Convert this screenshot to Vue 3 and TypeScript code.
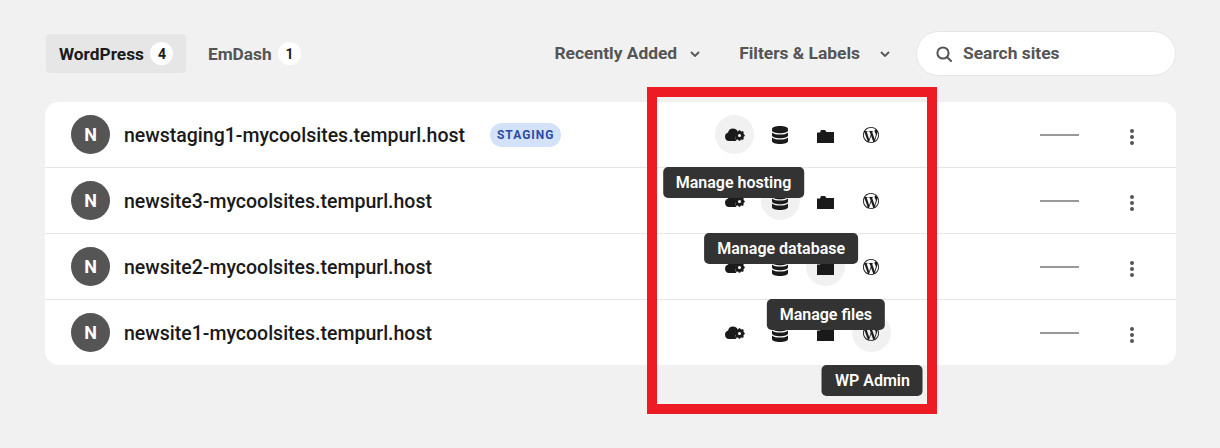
<script setup lang="ts">
interface Site { name: string; staging?: boolean; hover: number }
const sites: Site[] = [
  { name: 'newstaging1-mycoolsites.tempurl.host', staging: true, hover: 0 },
  { name: 'newsite3-mycoolsites.tempurl.host', hover: 1 },
  { name: 'newsite2-mycoolsites.tempurl.host', hover: 2 },
  { name: 'newsite1-mycoolsites.tempurl.host', hover: 3 },
]
const tips = ['Manage hosting', 'Manage database', 'Manage files', 'WP Admin']
const wp = 'M21.469 6.825c.84 1.537 1.318 3.3 1.318 5.175 0 3.979-2.156 7.456-5.363 9.325l3.295-9.527c.615-1.54.82-2.771.82-3.864 0-.405-.026-.78-.07-1.11m-7.981.105c.647-.03 1.232-.105 1.232-.105.582-.075.514-.93-.067-.899 0 0-1.755.135-2.88.135-1.064 0-2.85-.15-2.85-.15-.585-.03-.661.855-.075.885 0 0 .54.061 1.125.09l1.68 4.605-2.37 7.08L5.354 6.9c.649-.03 1.234-.1 1.234-.1.585-.075.516-.93-.065-.896 0 0-1.746.138-2.874.138-.2 0-.438-.008-.69-.015C4.911 3.15 8.235 1.215 12 1.215c2.809 0 5.365 1.072 7.286 2.833-.046-.003-.091-.009-.141-.009-1.06 0-1.812.923-1.812 1.914 0 .89.513 1.643 1.06 2.531.411.72.89 1.643.89 2.977 0 .915-.354 1.994-.821 3.479l-1.075 3.585-3.9-11.61.001.014zM12 22.784c-1.059 0-2.081-.153-3.048-.437l3.237-9.406 3.315 9.087c.024.053.05.101.078.149-1.12.393-2.325.609-3.582.609M1.211 12c0-1.564.336-3.05.935-4.39L7.29 21.709C3.694 19.96 1.212 16.271 1.211 12M12 0C5.385 0 0 5.385 0 12s5.385 12 12 12 12-5.385 12-12S18.615 0 12 0'
</script>

<template>
  <div class="page">
    <header class="toolbar">
      <div class="tabs">
        <div class="tab active">WordPress <span class="count">4</span></div>
        <div class="tab">EmDash <span class="count">1</span></div>
      </div>
      <div class="controls">
        <div class="select sort">
          <span class="lbl">Recently Added</span>
          <svg class="chev" viewBox="0 0 10 6" width="10" height="6"><path d="M1 1l4 4 4-4" fill="none" stroke="#555" stroke-width="1.8" /></svg>
        </div>
        <div class="select filter">
          <span class="lbl">Filters &amp; Labels</span>
          <svg class="chev" viewBox="0 0 10 6" width="10" height="6"><path d="M1 1l4 4 4-4" fill="none" stroke="#555" stroke-width="1.8" /></svg>
        </div>
        <div class="search">
          <svg viewBox="0 0 16 16" width="16" height="16"><circle cx="7" cy="7" r="5.6" fill="none" stroke="#555" stroke-width="2" /><path d="M11 11l4 4" stroke="#555" stroke-width="2" stroke-linecap="round" /></svg>
          <span class="lbl">Search sites</span>
        </div>
      </div>
    </header>

    <section class="card">
      <div v-for="site in sites" :key="site.name" class="row">
        <div class="avatar">N</div>
        <div class="name">{{ site.name }}</div>
        <span v-if="site.staging" class="badge">STAGING</span>
        <div class="actions">
          <div v-for="(tip, i) in tips" :key="tip" class="action" :class="{ hover: site.hover === i }">
            <svg v-if="i === 0" viewBox="0 0 22 14" width="22" height="14">
              <path d="M5 13a4.3 4.3 0 0 1-.9-8.4A5 5 0 0 1 9 .6c2.2 0 3.8 1 4.6 2.6a6.4 6.4 0 0 0-1.8 8.2l.6 1.6z" fill="#1a1a1a" />
              <g transform="translate(15.5 7.5)">
                <circle r="3.4" fill="none" stroke="#1a1a1a" stroke-width="2.4" />
                <path d="M0-5.3V5.3M-5.3 0H5.3M-3.8-3.8L3.8 3.8M-3.8 3.8L3.8-3.8" stroke="#1a1a1a" stroke-width="1.7" />
                <circle r="1.5" fill="#fff" />
              </g>
            </svg>
            <svg v-else-if="i === 1" viewBox="0 0 16 18" width="16" height="18">
              <path d="M0 3c0-1.8 3.6-3 8-3s8 1.2 8 3v1.2c0 1.8-3.6 3-8 3s-8-1.2-8-3z" fill="#1a1a1a" />
              <path d="M0 6.4C1.6 8 5 8.6 8 8.6s6.4-.6 8-2.2v2.8c0 1.8-3.6 3-8 3s-8-1.2-8-3z" fill="#1a1a1a" />
              <path d="M0 11.4c1.6 1.6 5 2.2 8 2.2s6.4-.6 8-2.2V15c0 1.8-3.6 3-8 3s-8-1.2-8-3z" fill="#1a1a1a" />
            </svg>
            <svg v-else-if="i === 2" class="folder" viewBox="0 0 17 13" width="17" height="13">
              <path d="M0 2.5h3L4 0h4l1.5 2H17V13H0z" fill="#1a1a1a" />
            </svg>
            <svg v-else viewBox="0 0 24 24" width="16" height="16"><path :d="wp" fill="#1a1a1a" stroke="#1a1a1a" stroke-width=".2" /></svg>
            <div v-if="site.hover === i" class="tooltip" :class="`tip-${i}`">{{ tip }}</div>
          </div>
        </div>
        <div class="dash"></div>
        <div class="kebab"><i></i><i></i><i></i></div>
      </div>
    </section>

    <div class="annotation"></div>
  </div>
</template>

<style>
html, body { margin: 0; background: #f1f1f1; }
</style>

<style scoped>
.page {
  position: relative;
  box-sizing: border-box;
  width: 1220px;
  height: 448px;
  padding: 31px 44px 0 45px;
  background: #f1f1f1;
  font-family: Roboto, "Noto Sans", sans-serif;
  overflow: hidden;
}
.toolbar {
  display: flex;
  align-items: center;
  justify-content: space-between;
  height: 45px;
  margin-bottom: 26px;
}
.tabs { display: flex; align-items: center; gap: 9px; margin-left: 1px; }
.tab {
  display: flex;
  align-items: center;
  gap: 6.5px;
  height: 39px;
  padding: 0 12.5px 0 13px;
  border-radius: 4px;
  font-size: 17.3px;
  font-weight: 700;
  color: #555;
}
.tab.active { background: #e6e6e6; color: #1a1a1a; }
.count {
  display: flex;
  align-items: center;
  justify-content: center;
  width: 23px;
  height: 23px;
  border-radius: 50%;
  background: #fff;
  font-size: 14px;
  color: #1a1a1a;
}
.controls { display: flex; align-items: center; }
.select {
  display: flex;
  align-items: center;
  font-size: 17.4px;
  font-weight: 700;
  color: #555;
}
.lbl { margin-bottom: 2px; }
.sort { gap: 13px; margin-right: 39px; margin-left: -1px; }
.filter { gap: 20px; margin-right: 26px; }
.search {
  box-sizing: border-box;
  display: flex;
  align-items: center;
  gap: 11px;
  width: 260px;
  height: 45px;
  padding-left: 19px;
  border: 1px solid #e6e6e6;
  border-radius: 23px;
  background: #fff;
  font-size: 17.4px;
  font-weight: 700;
  color: #555;
}
.card {
  display: flex;
  flex-direction: column;
  border-radius: 14px;
  background: #fff;
}
.row {
  box-sizing: border-box;
  display: flex;
  align-items: center;
  height: 66px;
  padding-left: 26px;
  border-bottom: 1px solid #e6e6e6;
}
.row:last-child { border-bottom: 0; height: 65px; }
.avatar {
  display: flex;
  align-items: center;
  justify-content: center;
  flex: none;
  width: 39px;
  height: 39px;
  margin-right: 14px;
  border-radius: 50%;
  background: #555;
  color: #fff;
  font-size: 18px;
  font-weight: 700;
}
.name { margin-top: 2px; font-size: 19.5px; font-weight: 500; color: #1a1a1a; white-space: nowrap; }
.badge {
  display: flex;
  align-items: center;
  height: 24px;
  margin-left: 25px;
  margin-top: 1px;
  padding: 0 7px;
  border-radius: 12px;
  background: #d3e2f8;
  color: #2b4ba5;
  font-size: 12px;
  font-weight: 700;
  letter-spacing: 1px;
}
.actions {
  position: absolute;
  left: 715px;
  display: flex;
  gap: 6.67px;
}
.action {
  position: relative;
  display: flex;
  align-items: center;
  justify-content: center;
  width: 39px;
  height: 39px;
  border-radius: 50%;
}
.action.hover { background: #f1f1f1; }
.folder { margin-top: 4px; }
.tooltip {
  position: absolute;
  top: 52px;
  left: 50%;
  z-index: 2;
  transform: translateX(-50%);
  padding: 0 13px;
  height: 31px;
  line-height: 31px;
  border-radius: 5px;
  background: #333;
  color: #fff;
  font-size: 16px;
  font-weight: 600;
  white-space: nowrap;
}
.tip-0 { margin-left: -1px; }
.tip-1 { margin-left: 1px; }
.tip-3 { margin-left: 1px; }
.dash {
  position: absolute;
  left: 1040px;
  width: 39px;
  height: 2px;
  margin-top: 1px;
  background: #999;
}
.kebab {
  position: absolute;
  left: 1130px;
  display: flex;
  flex-direction: column;
  gap: 2px;
  margin-top: 4px;
}
.kebab i { display: block; width: 4px; height: 4px; border-radius: 50%; background: #555; }
.annotation {
  position: absolute;
  left: 647px;
  top: 87px;
  box-sizing: border-box;
  width: 290px;
  height: 327px;
  border: 10px solid #ed1c24;
  pointer-events: none;
}
</style>
